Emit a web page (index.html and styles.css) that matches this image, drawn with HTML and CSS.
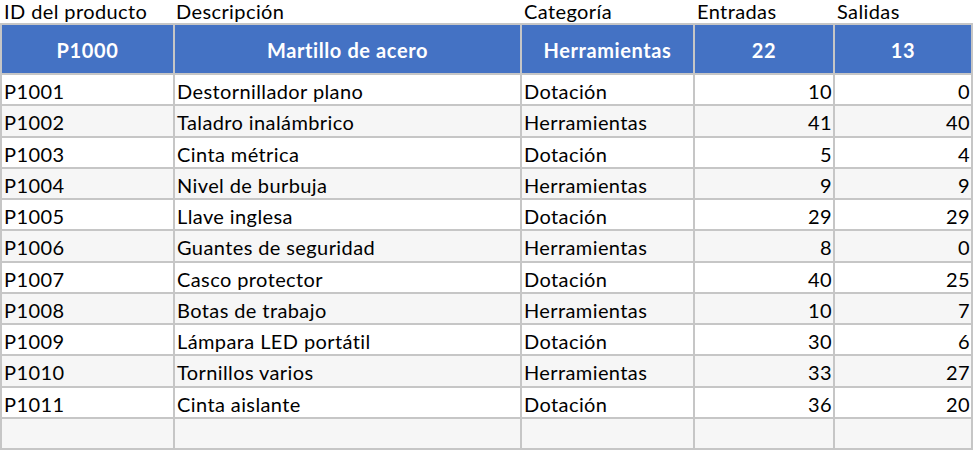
FILE: index.html
```html
<!DOCTYPE html>
<html lang="es">
<head>
<meta charset="utf-8">
<link rel="stylesheet" href="styles.css">
</head>
<body>
<div class="sheet">
  <div class="labels">
    <span>ID del producto</span>
    <span>Descripción</span>
    <span>Categoría</span>
    <span>Entradas</span>
    <span>Salidas</span>
  </div>
  <div class="grid">
    <div class="hd">P1000</div><div class="hd">Martillo de acero</div><div class="hd">Herramientas</div><div class="hd">22</div><div class="hd">13</div>

    <div class="c">P1001</div><div class="c">Destornillador plano</div><div class="c">Dotación</div><div class="c n">10</div><div class="c n">0</div>
    <div class="c alt">P1002</div><div class="c alt">Taladro inalámbrico</div><div class="c alt">Herramientas</div><div class="c alt n">41</div><div class="c alt n">40</div>
    <div class="c">P1003</div><div class="c">Cinta métrica</div><div class="c">Dotación</div><div class="c n">5</div><div class="c n">4</div>
    <div class="c alt">P1004</div><div class="c alt">Nivel de burbuja</div><div class="c alt">Herramientas</div><div class="c alt n">9</div><div class="c alt n">9</div>
    <div class="c">P1005</div><div class="c">Llave inglesa</div><div class="c">Dotación</div><div class="c n">29</div><div class="c n">29</div>
    <div class="c alt">P1006</div><div class="c alt">Guantes de seguridad</div><div class="c alt">Herramientas</div><div class="c alt n">8</div><div class="c alt n">0</div>
    <div class="c">P1007</div><div class="c">Casco protector</div><div class="c">Dotación</div><div class="c n">40</div><div class="c n">25</div>
    <div class="c alt">P1008</div><div class="c alt">Botas de trabajo</div><div class="c alt">Herramientas</div><div class="c alt n">10</div><div class="c alt n">7</div>
    <div class="c">P1009</div><div class="c">Lámpara LED portátil</div><div class="c">Dotación</div><div class="c n">30</div><div class="c n">6</div>
    <div class="c alt">P1010</div><div class="c alt">Tornillos varios</div><div class="c alt">Herramientas</div><div class="c alt n">33</div><div class="c alt n">27</div>
    <div class="c">P1011</div><div class="c">Cinta aislante</div><div class="c">Dotación</div><div class="c n">36</div><div class="c n">20</div>
    <div class="c alt"></div><div class="c alt"></div><div class="c alt"></div><div class="c alt"></div><div class="c alt"></div>
  </div>
</div>
</body>
</html>
```

FILE: styles.css
```css
html, body {
  margin: 0;
  padding: 0;
  background: #ffffff;
}

body {
  font-family: Lato, "Liberation Sans", sans-serif;
  font-size: 20px;
  letter-spacing: 0.4px;
  color: #000000;
}

.sheet {
  width: 973px;
}

.labels {
  display: grid;
  grid-template-columns: 173px 347px 173px 140px 140px;
  height: 23px;
  line-height: 22px;
}

.labels span {
  padding-left: 4px;
  white-space: nowrap;
}

.labels span:nth-child(2) {
  padding-left: 3px;
}

.grid {
  display: grid;
  grid-template-columns: 171px 345px 171px 138px 136px;
  grid-template-rows: 48px repeat(12, 29.25px);
  gap: 2px;
  padding: 2px;
  background: #c6c6c6;
}

.hd {
  background: #4472c4;
  color: #ffffff;
  font-weight: bold;
  font-size: 20px;
  letter-spacing: 0.6px;
  display: flex;
  align-items: center;
  justify-content: center;
  padding-top: 2px;
}

.c {
  background: #ffffff;
  display: flex;
  align-items: center;
  padding: 3px 2px 0 2px;
  white-space: nowrap;
}

.c.alt {
  background: #f6f6f6;
}

.c.n {
  justify-content: flex-end;
  padding-right: 1px;
}
```
